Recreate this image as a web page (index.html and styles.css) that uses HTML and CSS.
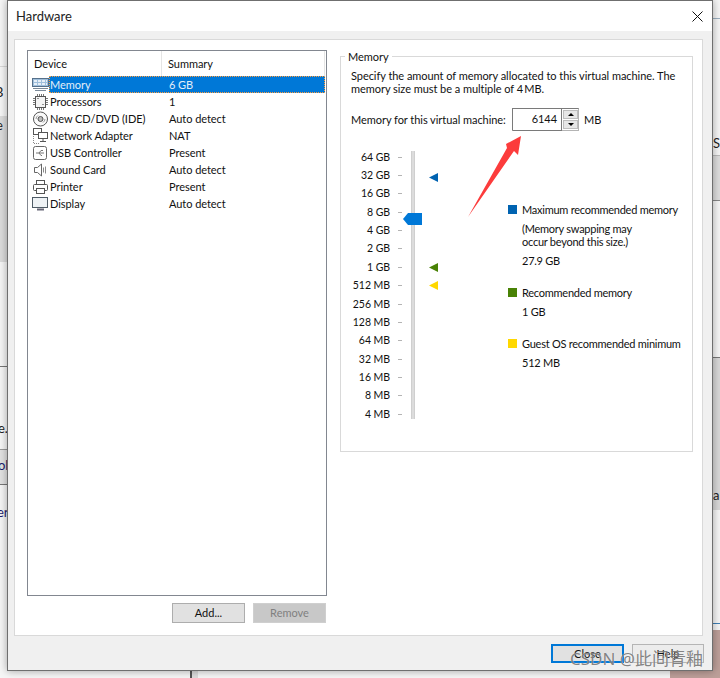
FILE: index.html
```html
<!DOCTYPE html>
<html lang="en">
<head>
<meta charset="utf-8">
<title>Hardware</title>
<link rel="stylesheet" href="styles.css">
</head>
<body>
<div class="desktop">
  <div class="bg bg-left-band"></div>
  <div class="bg bg-left-line1"></div>
  <div class="bg bg-left-line2"></div>
  <div class="bg bg-left-band2"></div>
  <div class="bg bg-right-band"></div>
  <div class="bg bg-right-band2"></div>
  <div class="bg bg-right-line"></div>
  <div class="bg bg-right-blue"></div>
  <div class="bg bg-pink"></div>
  <div class="bg bg-bottom-bar"></div>
  <span class="bg bgt bgt-b">B</span>
  <span class="bg bgt bgt-e">e</span>
  <span class="bg bgt bgt-e2">e.</span>
  <span class="bg bgt bgt-ol">oll</span>
  <span class="bg bgt bgt-er">er</span>
  <span class="bg bgt bgt-s">S</span>
  <span class="bg bgt bgt-an">an</span>

  <div class="dialog">
    <header class="titlebar">
      <span class="title">Hardware</span>
      <svg class="close-x" width="11" height="11" viewBox="0 0 11 11"><path d="M.5.5l10 10M10.500.5l-10 10" stroke="#111" stroke-width="1" fill="none"/></svg>
    </header>
    <div class="content">
      <section class="panel">
        <div class="left-col">
          <div class="list">
            <div class="list-head">
              <span class="col-device">Device</span>
              <span class="col-summary">Summary</span>
            </div>
            <div class="row selected">
              <svg class="ico" viewBox="0 0 17 16"><rect x=".5" y="1.500" width="16" height="8" fill="#9fbfdc" stroke="#56708a"/><path d="M2 4h13M2 7h13" stroke="#fff" stroke-width="1.400" stroke-dasharray="3 1"/><path d="M1 11.500h15M3 13.500h11" stroke="#7b8a99"/></svg>
              <div class="cells"><span class="name">Memory</span><span class="sum">6 GB</span></div>
            </div>
            <div class="row">
              <svg class="ico" viewBox="0 0 17 16"><rect x="3.500" y="2.500" width="10" height="11" fill="#f4f4f4" stroke="#555"/><path d="M1 4.500h2M1 6.500h2M1 8.500h2M1 10.500h2M14 4.500h2M14 6.500h2M14 8.500h2M14 10.500h2M5.500 0v2M7.500 0v2M9.500 0v2M11.500 0v2M5.500 14v2M7.500 14v2M9.500 14v2M11.500 14v2" stroke="#777"/><path d="M5.500 4.500h1M10.500 10.500h1" stroke="#333"/></svg>
              <div class="cells"><span class="name">Processors</span><span class="sum">1</span></div>
            </div>
            <div class="row">
              <svg class="ico" viewBox="0 0 17 16"><circle cx="8.500" cy="8" r="7" fill="#fafafa" stroke="#555"/><circle cx="8.500" cy="8" r="2.500" fill="#bbb" stroke="#555"/><path d="M4 8a4.500 4.500 0 0 1 2-3.500M13 8a4.500 4.500 0 0 1-2 3.500" stroke="#999" fill="none"/></svg>
              <div class="cells"><span class="name">New CD/DVD (IDE)</span><span class="sum">Auto detect</span></div>
            </div>
            <div class="row">
              <svg class="ico" viewBox="0 0 17 16"><rect x="1.500" y=".5" width="8" height="6" fill="#fff" stroke="#555"/><rect x="6.500" y="4.500" width="9" height="6" fill="#fff" stroke="#555"/><path d="M11 11v2M8 13.500h6" stroke="#555"/><path d="M1.500 8v7.500H8" stroke="#888" stroke-dasharray="1 1" fill="none"/></svg>
              <div class="cells"><span class="name">Network Adapter</span><span class="sum">NAT</span></div>
            </div>
            <div class="row">
              <svg class="ico" viewBox="0 0 17 16"><rect x="1.500" y="1.500" width="13" height="13" rx="2" fill="#fff" stroke="#666"/><path d="M4 8h8M7 8l2-2.500h2M7 8l2 2.500h1" stroke="#777" fill="none"/></svg>
              <div class="cells"><span class="name">USB Controller</span><span class="sum">Present</span></div>
            </div>
            <div class="row">
              <svg class="ico" viewBox="0 0 17 16"><path d="M2.500 5.500h3l4-3.500v12l-4-3.500h-3z" fill="#fff" stroke="#666"/><path d="M11.500 5.500v5M13.500 4.500v7" stroke="#8a8a8a"/></svg>
              <div class="cells"><span class="name">Sound Card</span><span class="sum">Auto detect</span></div>
            </div>
            <div class="row">
              <svg class="ico" viewBox="0 0 17 16"><rect x="4.500" y="1.500" width="8" height="4" fill="#fff" stroke="#555"/><rect x="1.500" y="5.500" width="14" height="6" rx="1" fill="#fff" stroke="#555"/><rect x="4.500" y="9.500" width="8" height="5" fill="#fff" stroke="#555"/></svg>
              <div class="cells"><span class="name">Printer</span><span class="sum">Present</span></div>
            </div>
            <div class="row">
              <svg class="ico" viewBox="0 0 17 16"><rect x=".5" y="1.500" width="15" height="10" fill="#eef2f5" stroke="#4f5b66"/><path d="M5 13.500h7" stroke="#667" stroke-width="2"/></svg>
              <div class="cells"><span class="name">Display</span><span class="sum">Auto detect</span></div>
            </div>
          </div>
          <div class="list-actions">
            <button class="btn">Add...</button>
            <button class="btn btn-off">Remove</button>
          </div>
        </div>
        <div class="group">
          <div class="group-title">Memory</div>
          <p class="desc">Specify the amount of memory allocated to this virtual machine. The memory size must be a multiple of 4&#8201;MB.</p>
          <div class="mem-row">
            <span class="mem-label">Memory for this virtual machine:</span>
            <div class="spin">
              <span class="spin-val">6144</span>
              <div class="spin-btns">
                <span class="spin-btn"><i class="up"></i></span>
                <span class="spin-btn"><i class="down"></i></span>
              </div>
            </div>
            <span class="mem-unit">MB</span>
          </div>
          <div class="mem-body">
            <div class="scale">
              <div class="scale-row"><span class="scale-label">64 GB</span><i class="tick"></i></div>
              <div class="scale-row"><span class="scale-label">32 GB</span><i class="tick"></i></div>
              <div class="scale-row"><span class="scale-label">16 GB</span><i class="tick"></i></div>
              <div class="scale-row"><span class="scale-label">8 GB</span><i class="tick"></i></div>
              <div class="scale-row"><span class="scale-label">4 GB</span><i class="tick"></i></div>
              <div class="scale-row"><span class="scale-label">2 GB</span><i class="tick"></i></div>
              <div class="scale-row"><span class="scale-label">1 GB</span><i class="tick"></i></div>
              <div class="scale-row"><span class="scale-label">512 MB</span><i class="tick"></i></div>
              <div class="scale-row"><span class="scale-label">256 MB</span><i class="tick"></i></div>
              <div class="scale-row"><span class="scale-label">128 MB</span><i class="tick"></i></div>
              <div class="scale-row"><span class="scale-label">64 MB</span><i class="tick"></i></div>
              <div class="scale-row"><span class="scale-label">32 MB</span><i class="tick"></i></div>
              <div class="scale-row"><span class="scale-label">16 MB</span><i class="tick"></i></div>
              <div class="scale-row"><span class="scale-label">8 MB</span><i class="tick"></i></div>
              <div class="scale-row"><span class="scale-label">4 MB</span><i class="tick"></i></div>
            </div>
            <div class="track">
              <svg class="thumb" width="19" height="12" viewBox="0 0 19 12"><path d="M0 6L5 0h14v12H5z" fill="#0078d7"/></svg>
              <svg class="mark mark-max" width="9" height="9" viewBox="0 0 9 9"><path d="M0 4.500L9 0v9z" fill="#0063b1"/></svg>
              <svg class="mark mark-rec" width="9" height="9" viewBox="0 0 9 9"><path d="M0 4.500L9 0v9z" fill="#498205"/></svg>
              <svg class="mark mark-min" width="9" height="9" viewBox="0 0 9 9"><path d="M0 4.500L9 0v9z" fill="#ffd800"/></svg>
            </div>
            <div class="legend">
              <div class="legend-item legend-max">
                <div class="legend-title"><i class="sq sq-max"></i>Maximum recommended memory</div>
                <div class="legend-note">(Memory swapping may<br>occur beyond this size.)</div>
                <div class="legend-val">27.9 GB</div>
              </div>
              <div class="legend-item">
                <div class="legend-title"><i class="sq sq-rec"></i>Recommended memory</div>
                <div class="legend-val">1 GB</div>
              </div>
              <div class="legend-item">
                <div class="legend-title"><i class="sq sq-min"></i>Guest OS recommended minimum</div>
                <div class="legend-val">512 MB</div>
              </div>
            </div>
          </div>
        </div>
      </section>
      <footer class="footer">
        <button class="btn btn-foot btn-default">Close</button>
        <button class="btn btn-foot btn-help">Help</button>
      </footer>
    </div>
  </div>
  <svg class="arrow" width="60" height="90" viewBox="0 0 60 90"><path d="M0 81L39 12l-1-4 15-8-3 19-4-4z" fill="#fc3c3c"/></svg>
  <span class="watermark">CSDN @此间青釉</span>
</div>
</body>
</html>
```
FILE: styles.css
```css
* { box-sizing: border-box; }
html, body { margin: 0; padding: 0; }
body { width: 720px; height: 678px; overflow: hidden; background: #fff; }
.desktop {
  position: relative; width: 720px; height: 678px; overflow: hidden;
  background: #f6f6f6; color: #111;
  font-family: Lato, Roboto, sans-serif; font-size: 11px; line-height: 13px; letter-spacing: -.05px;
}
.bg { position: absolute; display: block; }
.bg-left-band { left: 0; top: 116px; width: 7px; height: 146px; background: #dcdcdc; }
.bg-left-line1 { left: 0; top: 66px; width: 7px; height: 1px; background: #d8d8d8; }
.bg-left-line2 { left: 0; top: 366px; width: 7px; height: 1px; background: #777; }
.bg-left-band2 { left: 0; top: 449px; width: 7px; height: 36px; background: #e2e2e2; border-top: 1px solid #999; border-bottom: 1px solid #777; }
.bg-right-band { left: 713px; top: 155px; width: 7px; height: 46px; background: #ddd; border-top: 1px solid #bbb; border-bottom: 1px solid #888; }
.bg-right-band2 { left: 713px; top: 357px; width: 7px; height: 153px; background: #d8d8d8; border-top: 1px solid #777; }
.bg-right-line { left: 713px; top: 18px; width: 7px; height: 1px; background: #9cb0c0; }
.bg-right-blue { left: 713px; top: 623px; width: 7px; height: 1px; background: #3d7fb5; }
.bg-pink { left: 670px; top: 630px; width: 50px; height: 48px; background: #bd9f99; }
.bg-bottom-bar { left: 190px; top: 670px; width: 8px; height: 8px; background: #ddd; border-left: 2px solid #555; }
.bgt { color: #222; font-size: 13px; line-height: 14px; }
.bgt-b { left: -5px; top: 85px; }
.bgt-e { left: -4px; top: 118px; }
.bgt-e2 { left: -2px; top: 421px; }
.bgt-ol { left: -2px; top: 458px; color: #1c1c6e; }
.bgt-er { left: -3px; top: 505px; color: #1c1c6e; }
.bgt-s { left: 713px; top: 136px; }
.bgt-an { left: 713px; top: 488px; }

.dialog {
  position: absolute; left: 7px; top: 0; width: 706px; height: 671px;
  border: 1px solid #6f6f6f; background: #f0f0f0;
  display: flex; flex-direction: column;
  box-shadow: 0 0 8px rgba(0,0,0,.35);
}
.titlebar { height: 30px; background: #fff; display: flex; align-items: center; justify-content: space-between; padding: 0 9px 0 8px; flex: none; }
.title { font-size: 13px; color: #222; letter-spacing: 0; }
.close-x { display: block; }
.content { flex: 1; display: flex; flex-direction: column; padding: 8px 8px 0 6px; }
.panel { height: 597px; background: #fff; border: 1px solid #d9d9d9; display: flex; flex: none; margin-right: 1px; }
.left-col { width: 300px; margin: 10px 0 0 12px; flex: none; }
.list { width: 300px; height: 546px; border: 1px solid #828790; background: #fff; }
.list-head { height: 25px; display: flex; align-items: center; }
.col-device { width: 134px; height: 100%; padding: 6px 0 0 6px; border-right: 1px solid #e5e5e5; }
.col-summary { width: 163px; height: 100%; padding: 6px 0 0 6px; border-right: 1px solid #e5e5e5; }
.row { height: 17px; display: flex; align-items: center; padding-left: 5px; }
.ico { width: 17px; height: 16px; flex: none; margin-left: -1px; }
.cells { width: 276px; height: 17px; display: flex; align-items: center; }
.name { width: 120px; padding-left: 1px; flex: none; }
.selected .cells { background: #0078d7; outline: 1px dotted #ff9d3c; outline-offset: -1px; color: #e4eef8; }
.list-actions { display: flex; justify-content: flex-end; gap: 8px; margin-top: 7px; width: 299px; }
.btn { width: 73px; height: 20px; padding: 0 0 1px; font: inherit; color: #111; background: #e1e1e1; border: 1px solid #adadad; }
.btn-off { background: #c8c8c8; color: #808080; border-color: #cfcfcf; }
.group { width: 353px; height: 396px; margin: 16px 0 0 13px; border: 1px solid #d9d9d9; padding: 0 10px; flex: none; }
.group-title { display: table; background: #fff; margin: -7px 0 0 -6px; padding: 0 3px 0 3px; }
.desc { margin: 6px 0 0; width: 340px; }
.mem-row { display: flex; align-items: center; margin-top: 12px; height: 24px; }
.mem-label { width: 161px; white-space: nowrap; }
.spin { width: 67px; height: 23px; display: flex; border: 1px solid #b4b4b4; border-left-color: #7a7a7a; border-top-color: #7a7a7a; background: #fff; }
.spin-val { width: 49px; text-align: right; padding: 3px 4px 0 0; border-right: 1px solid #7a7a7a; border-bottom: 1px solid #7a7a7a; height: 22px; margin-bottom: -1px; }
.spin-btns { flex: 1; display: flex; flex-direction: column; padding: 1px 0 0 1px; gap: 1px; }
.spin-btn { height: 9px; width: 15px; background: #e6e6e6; border: 1px solid #bdbdbd; display: flex; align-items: center; justify-content: center; }
.up { width: 0; height: 0; border: 3px solid transparent; border-bottom-color: #000; border-top: 0; }
.down { width: 0; height: 0; border: 3px solid transparent; border-top-color: #000; border-bottom: 0; }
.mem-unit { margin-left: 5px; }
.mem-body { display: flex; margin-top: 17px; position: relative; }
.scale { width: 51px; flex: none; }
.scale-row { height: 18.360px; display: flex; align-items: center; }
.scale-label { width: 39px; text-align: right; flex: none; font-size: 10.500px; white-space: nowrap; }
.tick { width: 4px; height: 1px; background: #b4b4b4; margin-left: 8px; }
.track { position: relative; width: 4px; height: 268px; margin: 3px 0 0 9px; background: #dcdcdc; border-left: 1px solid #cfcfcf; border-right: 1px solid #cfcfcf; flex: none; }
.thumb { position: absolute; left: -9px; top: 62px; }
.mark { position: absolute; left: 17px; }
.mark-max { top: 22px; }
.mark-rec { top: 112px; }
.mark-min { top: 130px; }
.legend { margin: 55px 0 0 93px; letter-spacing: -.25px; }
.legend-item { margin-bottom: 19px; }
.legend-title { display: flex; align-items: center; white-space: nowrap; }
.sq { width: 9px; height: 9px; margin-right: 5px; flex: none; }
.sq-max { background: #0063b1; }
.sq-rec { background: #498205; }
.sq-min { background: #ffd800; }
.legend-note { margin: 6px 0 0 14px; white-space: nowrap; }
.legend-val { margin: 6px 0 0 14px; }
.footer { display: flex; justify-content: flex-end; gap: 8px; padding-top: 8px; }
.btn-foot { height: 19px; line-height: 15px; }
.btn-default { border: 2px solid #0078d7; }
.btn-help { background: #ececec; border-color: #b5b5b5; width: 72px; }
.arrow { position: absolute; left: 468px; top: 136px; }
.watermark {
  position: absolute; left: 570px; top: 649px; font-size: 17px; line-height: 20px; white-space: nowrap; letter-spacing: 0;
  font-family: "Noto Sans", "Noto Sans CJK SC", sans-serif;
  color: rgba(100,100,100,.8); text-shadow: 0 0 1px rgba(255,255,255,.8);
}
```
